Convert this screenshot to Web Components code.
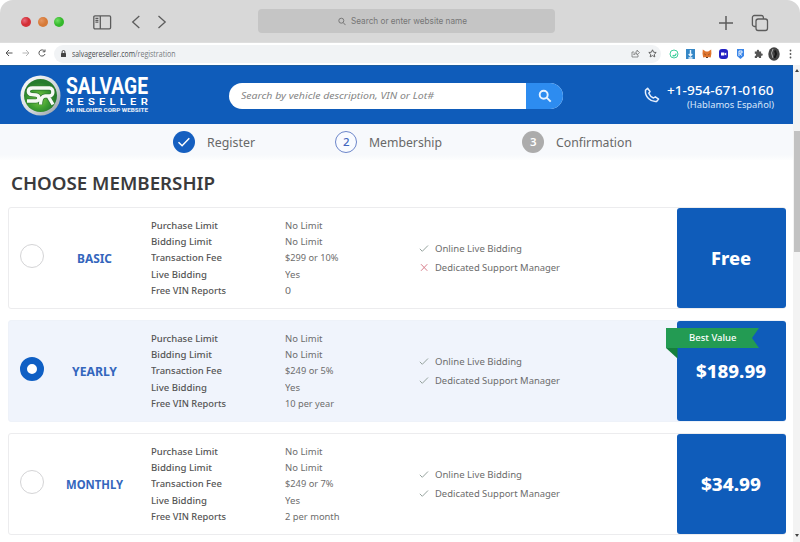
<!DOCTYPE html>
<html lang="en">
<head>
<meta charset="utf-8">
<title>Salvage Reseller - Registration</title>
<style>
html, body { margin: 0; height: 100%; background: #fff; overflow: hidden; }
body { font-family: "Noto Sans", "Open Sans", sans-serif; color: #555; }
</style>
</head>
<body>
<app-window></app-window>
<script>
const define = (name, html, setup) => {
  const tpl = document.createElement('template');
  tpl.innerHTML = html;
  customElements.define(name, class extends HTMLElement {
    connectedCallback() {
      if (this.shadowRoot) return;
      this.attachShadow({ mode: 'open' }).append(tpl.content.cloneNode(true));
      if (setup) setup(this, this.shadowRoot);
    }
  });
};

/* A line of text condensed or widened to a given width. */
define('fit-text', `
<style>
:host { display: block; flex: none; white-space: nowrap; }
span { display: inline-block; transform-origin: 0 50%; }
</style><span></span>`, (el, root) => {
  const s = root.querySelector('span');
  s.textContent = el.getAttribute('text');
  const w = +el.getAttribute('w');
  const tall = +(el.getAttribute('tall') || 1);
  el.style.width = w + 'px';
  s.style.transform = `scale(${w / s.getBoundingClientRect().width}, ${tall})`;
});

define('window-bar', `
<style>
:host { display: flex; align-items: center; height: 43px; box-sizing: border-box; padding: 0 31px 0 21px; background: #d8d8d8; border-radius: 13px 13px 0 0; border-bottom: 1px solid #dedede; }
svg { flex: none; display: block; fill: none; stroke: #5c5c5c; stroke-width: 1.3; }
.dots { display: flex; gap: 6.5px; margin-top: 2px; }
i { width: 10px; height: 10px; border-radius: 50%; }
.r { background: radial-gradient(circle at 35% 35%, #e8687a, #d42f36 45%, #cf3a3f); } .o { background: radial-gradient(circle at 35% 35%, #e59560, #d67a38 50%); } .g { background: radial-gradient(circle at 35% 35%, #6fdf62, #35b82c 50%); }
.search { display: flex; align-items: center; gap: 5px; width: 297px; height: 23.5px; box-sizing: border-box; padding-left: 80px; margin-left: 91.500px; background: #c5c5c5; border-radius: 4px; font: 8.800px Inter, sans-serif; color: #767676; }
.search svg { stroke: #777; stroke-width: 1; }
.plus { margin-left: 163px; }
</style>
<div class="dots"><i class="r"></i><i class="o"></i><i class="g"></i></div>
<svg style="margin:2px 0 0 29px" width="19" height="15" viewBox="0 0 19 15"><rect x=".8" y=".8" width="16.8" height="13" rx="1.2"/><path d="M7.3 1v13M2.4 3.4h3M2.4 5.3h3M2.4 7.2h3"/></svg>
<svg style="margin:2px 0 0 19px" width="10" height="14" viewBox="0 0 10 14"><path d="M8.3 1 1.7 7l6.600 6"/></svg>
<svg style="margin:2px 0 0 15.500px" width="10" height="14" viewBox="0 0 10 14"><path d="m1.500 1 6.700 6-6.700 6"/></svg>
<div class="search"><svg width="8" height="9" viewBox="0 0 8 9"><circle cx="3.3" cy="3.7" r="2.500"/><path d="m5.200 5.600 2.300 2.500"/></svg><fit-text style="margin-top:-1px" text="Search or enter website name" w="116"></fit-text></div>
<svg class="plus" style="margin-top:4px" width="16" height="16" viewBox="0 0 16 16"><path stroke-width="1.500" d="M8 1v14M1 8h14"/></svg>
<svg style="margin:4px 0 0 17px" width="18" height="18" viewBox="0 0 18 18"><rect x="5" y="5" width="11.500" height="11.500" rx="2.200"/><path d="M5 12.500H3.400a2 2 0 0 1-2-2v-7a2 2 0 0 1 2-2h7a2 2 0 0 1 2 2V5"/></svg>
`);

define('address-bar', `
<style>
:host { display: flex; align-items: center; height: 22px; box-sizing: border-box; padding: 0 4px 1px 5px; background: #fff; }
svg { display: block; flex: none; fill: none; stroke: #555; stroke-width: 1; }
.nav { display: flex; gap: 8.500px; width: 49px; margin-top: -1px; }
.pill { display: flex; align-items: center; width: 607px; height: 18px; box-sizing: border-box; padding: 0 4px 0 7px; background: #f1f3f5; border-radius: 9px; font: 8.500px "Open Sans", sans-serif; color: #484b4f; }
fit-text { margin-left: 6px; }
.path { margin-left: 0; color: #757a80; }
.tools { margin-left: auto; display: flex; gap: 8px; }
.ext { display: flex; align-items: center; gap: 6px; margin-left: 8px; }
</style>
<div class="nav">
<svg width="8" height="8" viewBox="0 0 8 8"><path d="M7.500 4H1M4 1 1 4l3 3"/></svg>
<svg style="stroke:#b6b6b6" width="8" height="8" viewBox="0 0 8 8"><path d="M.5 4H7M4 1l3 3-3 3"/></svg>
<svg width="8" height="8" viewBox="0 0 8 8"><path d="M6.600 2.200A3.100 3.100 0 1 0 7 5M7 .5v2.300H4.700"/></svg>
</div>
<div class="pill">
<svg width="5" height="8" viewBox="0 0 5 8"><rect x="0" y="3" width="5" height="4" rx=".5" fill="#444" stroke="none"/><path d="M1.100 3V1.900a1.400 1.400 0 0 1 2.800 0V3" stroke="#444"/></svg>
<fit-text text="salvagereseller.com" w="63"></fit-text><fit-text class="path" text="/registration" w="40.500"></fit-text>
<div class="tools">
<svg width="9" height="9" viewBox="0 0 9 9" style="stroke:#777"><path d="M3 3H1v5h6V6M2.800 6c.2-2.200 1.200-3 3.200-3V1l2.500 2.700L6 6V4.500C4.500 4.500 3.500 5 2.800 6Z" stroke-width=".8"/></svg>
<svg width="9" height="9" viewBox="0 0 9 9"><path d="m4.500.8 1.100 2.400 2.600.3-1.900 1.800.5 2.600-2.300-1.300-2.300 1.300.5-2.600L.8 3.500l2.600-.3Z" stroke-width=".9"/></svg>
</div></div>
<div class="ext">
<svg width="10" height="10" viewBox="0 0 10 10"><circle cx="5" cy="5" r="4" stroke="#3fcf9c"/><path d="M7 4.500C7 6 6 7 4.500 6.800M5 6.500l-1.500.3" stroke="#3fcf9c" stroke-width="1.300"/></svg>
<svg style="margin-left:1px" width="9" height="10" viewBox="0 0 9 10"><path fill="#3587c6" stroke="none" d="M0 0h9v10H0z"/><path stroke="#e8f5ff" stroke-width="1.400" d="M4.500 1v5M2.700 5l1.800 2 1.800-2M2.500 9h4"/></svg>
<svg style="margin-left:1px" width="10" height="10" viewBox="0 0 10 10"><path fill="#df752e" stroke="none" d="m.8.6 3 1.800h2.400l3-1.800.2 4-.7 3.800-2.200-.3-1 1H4.400l-1-1-2.200.3L.5 4.600Z"/><path stroke="#63391f" d="m2.500 5 1 .7M7.500 5l-1 .7M4 8.500h2"/></svg>
<svg style="margin-left:1px" width="9" height="10" viewBox="0 0 9 10"><rect width="9" height="10" rx="3" fill="#2320c4" stroke="none"/><path fill="#fff" stroke="none" d="M2 3.500h3.300v3H2zM5.600 4.600 7.300 3.500v3L5.600 5.400z"/></svg>
<svg style="margin-left:3px" width="7" height="10" viewBox="0 0 7 10"><path fill="#3b86e8" stroke="none" d="M0 0h7v7L3.500 10 0 7z"/><path stroke="#fff" stroke-width=".9" d="M2 7V2h3v2H3v1l2 1.500"/></svg>
<svg style="margin-left:4px" width="9" height="10" viewBox="0 0 9 10"><path fill="#555" stroke="none" d="M.8 2.500h2c-.4-2.200 2.600-2.200 2.300 0h2v2.100c2.200-.4 2.200 2.500 0 2.200V9H4.900c.2-1.700-2-1.700-1.900 0H.8V6.900c1.700.2 1.700-2.300 0-2Z"/></svg>
<svg style="margin-left:-1px" width="12" height="14" viewBox="0 0 12 14"><ellipse cx="6" cy="7" rx="5.700" ry="6.800" fill="#444" stroke="none"/><path stroke="#aaa" d="M5 2 3.500 6 5 11"/><path stroke="#171717" stroke-width="2" d="M7 3.500 8 7l-1.500 4"/></svg>
<svg style="margin-left:3px" width="3" height="10" viewBox="0 0 3 10"><g fill="#555" stroke="none"><circle cx="1.500" cy="1.500" r=".9"/><circle cx="1.500" cy="5" r=".9"/><circle cx="1.500" cy="8.500" r=".9"/></g></svg>
</div>
`);

define('brand-logo', `
<style>
:host { display: flex; gap: 5px; align-items: center; color: #fff; }
.words { display: flex; flex-direction: column; font-family: "Roboto", sans-serif; font-weight: 700; }
.a { font-size: 16.500px; line-height: 20px; height: 20px; } .b { font-size: 9.600px; line-height: 10px; letter-spacing: 3.600px; font-weight: 600; height: 10px; } .c { font-size: 5px; line-height: 7px; height: 7px; font-weight: 900; opacity: .85; }
</style>
<svg width="41" height="41" viewBox="0 0 41 41">
<defs><linearGradient id="rim" x1="0" y1="0" x2="1" y2="1"><stop offset="0" stop-color="#fff"/><stop offset=".55" stop-color="#d5d9dd"/><stop offset="1" stop-color="#8d979e"/></linearGradient>
<radialGradient id="gr" cx=".45" cy=".6"><stop offset="0" stop-color="#87cb48"/><stop offset=".6" stop-color="#3f9f31"/><stop offset="1" stop-color="#267b2c"/></radialGradient></defs>
<circle cx="20.500" cy="20.500" r="20" fill="url(#rim)"/><circle cx="20.500" cy="20.500" r="16.500" fill="url(#gr)"/>
<g fill="none" stroke-linejoin="round"><path stroke="#2f7a31" stroke-width="5" d="M30 13H12.500C7 13 7 19.500 12 19.700l4 .3c4 .3 3.500 6-.2 6H7M20.500 29.500c.2-5 1-8.500 4.500-8.500h4.500c4.500 0 4.500-8 0-8M28 21l5 8.500"/>
<path stroke="#f6f9f4" stroke-width="3.300" d="M30 13H12.500C7 13 7 19.500 12 19.700l4 .3c4 .3 3.500 6-.2 6H7M20.500 29.500c.2-5 1-8.500 4.500-8.500h4.500c4.500 0 4.500-8 0-8M28 21l5 8.500"/></g>
</svg>
<div class="words"><fit-text class="a" text="SALVAGE" w="82" tall="1.4"></fit-text><fit-text class="b" text="RESELLER" w="86"></fit-text><fit-text class="c" text="AN INLOHER CORP WEBSITE" w="82"></fit-text></div>
`);

define('site-header', `
<style>
:host { display: flex; align-items: center; height: 59px; box-sizing: border-box; border-top: 1px solid #1c5c9e; padding: 0 19.500px 0 20px; background: #0f5cba; color: #fff; }
.search { display: flex; width: 334px; height: 26px; margin: 1px 0 0 77px; border-radius: 13px; overflow: hidden; background: #fff; color: #858585; font-size: 9.600px; font-style: italic; align-items: center; }
.search fit-text { margin-left: 12px; }
.go { margin-left: auto; width: 37px; height: 26px; background: #2d8cf0; display: grid; place-items: center; }
.tel { display: flex; margin-left: auto; gap: 7px; margin-top: 4px; }
.num { display: flex; flex-direction: column; align-items: flex-end; }
.n { font-size: 13px; line-height: 15px; font-weight: 500; } .h { font-size: 9px; line-height: 13px; color: #d9e7fb; }
.tel svg { margin-top: 4px; }
</style>
<brand-logo></brand-logo>
<div class="search"><fit-text text="Search by vehicle description, VIN or Lot#" w="193"></fit-text>
<div class="go"><svg width="14" height="14" viewBox="0 0 14 14" fill="none" stroke="#e9f3ff" stroke-width="1.900"><circle cx="5.700" cy="5.700" r="4"/><path d="m8.700 8.700 4 4"/></svg></div></div>
<div class="tel"><svg width="16" height="16" viewBox="0 0 16 16" fill="none" stroke="#e6effd" stroke-width="1.500" stroke-linejoin="round"><path d="M1.500 3.300 3.600 1.200 6 4.500 4.800 6.200C5.600 8.200 7.300 10 9.500 11l1.800-1.200 3.300 2.300-2 2.400C6.500 15.300.8 9.400 1.500 3.300Z"/></svg>
<div class="num"><fit-text class="n" text="+1-954-671-0160" w="106.500"></fit-text><fit-text class="h" text="(Hablamos Español)" w="87"></fit-text></div></div>
`);

define('step-item', `
<style>
:host { display: flex; align-items: center; gap: 11.500px; font-size: 12.300px; line-height: 18px; color: #686868; }
.c { width: 22px; height: 22px; border-radius: 50%; box-sizing: border-box; display: grid; place-items: center; background: #155fc0; font-size: 11.500px; font-weight: 500; }
:host([state=current]) .c { background: #f9fbff; border: 1px solid #6c86ca; color: #4166be; }
:host([state=next]) .c { background: #acacac; color: #fff; font-weight: 600; }
fit-text { margin-top: 1px; }
</style><div class="c"></div>`, (el, root) => {
  const c = root.querySelector('.c');
  if (el.getAttribute('state') === 'done') c.innerHTML = '<svg width="14" height="12" viewBox="0 0 14 12" fill="none" stroke="#fff" stroke-width="1.500"><path d="m1.500 6.200 3.600 3.500 7.200-7.500"/></svg>';
  else c.textContent = el.getAttribute('n');
  const t = document.createElement('fit-text');
  t.setAttribute('text', el.getAttribute('label'));
  t.setAttribute('w', el.getAttribute('w'));
  root.append(t);
});

define('step-bar', `
<style>
:host { display: flex; align-items: center; gap: 80.700px; height: 36px; box-sizing: border-box; padding-left: 173px; background: linear-gradient(#f7f9fc 85%, #fdfefe); }
</style>
<step-item state="done" label="Register" w="48"></step-item>
<step-item state="current" n="2" label="Membership" w="73"></step-item>
<step-item state="next" n="3" label="Confirmation" w="76"></step-item>
`);

define('plan-card', `
<style>
:host { display: flex; position: relative; height: 102px; box-sizing: border-box; border: 1px solid #ececee; border-radius: 3px; background: #fff; align-items: center; font-size: 9.700px; }
:host([selected]) { background: #f0f4fc; border-color: #eef2f9; }
.radio { width: 24px; height: 24px; box-sizing: border-box; margin: -4px 0 0 11px; border: 1px solid #d4d4d6; border-radius: 50%; background: #fff; flex: none; }
:host([selected]) .radio { border: 7.500px solid #0f5fc4; }
.name { width: 101px; flex: none; display: flex; justify-content: center; font-size: 11.500px; font-weight: 700; color: #3466bd; }
.rows { display: grid; grid-template-columns: 134px 134px; grid-auto-rows: 16.050px; line-height: 16px; margin: 1px 0 0 6px; flex: none; }
.k { color: #555; font-weight: 500; } .v { color: #6d6d6d; }
.feats { display: grid; gap: 0; grid-auto-rows: 19px; margin-top: -1px; color: #6c6c6c; }
.f { display: flex; align-items: center; gap: 6px; }
.price { margin: 0 -1px 0 auto; width: 109px; height: 100px; flex: none; border-radius: 3px; background: #0f5cba; color: #fff; display: grid; place-items: center; font-size: 18.500px; font-weight: 800; line-height: 20px; box-sizing: border-box; padding-right: 2px; }
.ribbon { position: absolute; left: 657px; top: 7px; width: 93px; height: 31px; }
.ribbon svg { display: block; }
.ribbon fit-text { position: absolute; left: 23px; top: 3px; font-size: 9.700px; line-height: 14px; font-weight: 500; color: #fff; }
</style>
<div class="radio"></div><div class="name"></div><div class="rows"></div><div class="feats"></div><div class="price"></div>`, (el, root) => {
  const ft = (p, w, cls) => `<fit-text class="${cls || ''}" text="${p}" w="${w}"></fit-text>`;
  const q = s => root.querySelector(s);
  const [name, nw] = el.getAttribute('name').split('|');
  q('.name').innerHTML = ft(name, nw);
  const keys = [['Purchase Limit', 67], ['Bidding Limit', 61], ['Transaction Fee', 71], ['Live Bidding', 56], ['Free VIN Reports', 75]];
  const vals = ['No Limit|37.5', 'No Limit|37.5', el.getAttribute('fee'), 'Yes|15', el.getAttribute('vin')];
  q('.rows').innerHTML = keys.map((k, i) => ft(k[0], k[1], 'k') + ft(...vals[i].split('|'), 'v')).join('');
  const yes = '<svg width="10" height="9" viewBox="0 0 10 9" fill="none" stroke="#96a39e" stroke-width="1"><path d="m.8 4.800 2.500 2.500L9 1.500"/></svg>';
  const no = '<svg width="10" height="9" viewBox="0 0 10 9" fill="none" stroke="#d87f8d" stroke-width="1"><path d="m2 1.200 6.300 6.600M8.300 1.200 2 7.800"/></svg>';
  q('.feats').innerHTML = `<div class="f">${yes}${ft('Online Live Bidding', 87)}</div><div class="f">${el.hasAttribute('no-manager') ? no : yes}${ft('Dedicated Support Manager', 125)}</div>`;
  q('.price').innerHTML = ft(...el.getAttribute('price').split('|'));
  if (el.hasAttribute('badge')) {
    const r = document.createElement('div');
    r.className = 'ribbon';
    r.innerHTML = `<svg width="93" height="31" viewBox="0 0 93 31"><path fill="#15803c" d="M0 20h11.500v10.500z"/><path fill="#239b53" d="M0 0h93l-7 10 7 10H0z"/></svg>${ft(el.getAttribute('badge'), 47.5)}`;
    root.append(r);
  }
});

define('scroll-bar', `
<style>
:host { display: flex; flex-direction: column; align-items: center; justify-content: space-between; background: #f3f3f3; box-sizing: border-box; padding: 4px 0 5px 1px; }
.thumb { width: 6px; height: 121px; background: #c2c2c2; margin-top: 59px; }
svg { display: block; } .sp { flex: 1; }
</style>
<svg width="4" height="3"><path d="M0 3 2 0l2 3z" fill="#444"/></svg><div class="thumb"></div><div class="sp"></div><svg width="4" height="3"><path d="M0 0h4L2 3z" fill="#444"/></svg>
`);

define('app-window', `
<style>
:host { display: flex; flex-direction: column; width: 800px; height: 542px; background: #fff; overflow: hidden; }
.page { display: grid; grid-template-columns: 793px 7px; flex: 1; }
h1 { margin: 0; padding: 10px 0 0 11px; height: 47px; box-sizing: border-box; font-size: 18.500px; line-height: 26px; font-weight: 650; color: #3a3a3c; }
.plans { display: grid; gap: 11px; padding: 0 7px 0 8px; }
</style>
<window-bar></window-bar>
<address-bar></address-bar>
<div class="page"><div>
<site-header></site-header>
<step-bar></step-bar>
<h1><fit-text text="CHOOSE MEMBERSHIP" w="204"></fit-text></h1>
<div class="plans">
<plan-card name="BASIC|35" fee="$299 or 10%|53.5" vin="0|6" price="Free|40" no-manager></plan-card>
<plan-card selected name="YEARLY|45" fee="$249 or 5%|48.5" vin="10 per year|49" price="$189.99|70" badge="Best Value"></plan-card>
<plan-card name="MONTHLY|57" fee="$249 or 7%|48.5" vin="2 per month|54.5" price="$34.99|60"></plan-card>
</div></div>
<scroll-bar></scroll-bar></div>
`);
</script>
</body>
</html>
